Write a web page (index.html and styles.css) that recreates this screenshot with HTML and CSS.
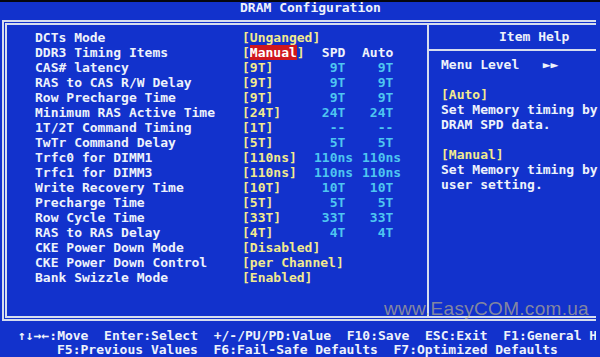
FILE: index.html
```html
<!DOCTYPE html>
<html lang="en">

<head>
    <meta charset="UTF-8">
    <meta name="viewport" content="width=device-width, initial-scale=1.0">
    <title>DRAM Configuration</title>

    <link rel="stylesheet" href="styles.css">
</head>

<body>
    <div class="screen">
        <div class="topstrip"></div>
        <div class="title">DRAM Configuration</div>

        <div class="frame">
            <div class="items">
                <div class="row"><span class="label">DCTs Mode</span><span class="value">[Unganged]</span></div>
                <div class="row"><span class="label">DDR3 Timing Items</span><span class="value">[<span class="sel">Manual</span>]</span><span class="col head"> SPD </span><span class="col head">Auto </span></div>
                <div class="row"><span class="label">CAS# latency</span><span class="value">[9T]</span><span class="col">  9T </span><span class="col">  9T </span></div>
                <div class="row"><span class="label">RAS to CAS R/W Delay</span><span class="value">[9T]</span><span class="col">  9T </span><span class="col">  9T </span></div>
                <div class="row"><span class="label">Row Precharge Time</span><span class="value">[9T]</span><span class="col">  9T </span><span class="col">  9T </span></div>
                <div class="row"><span class="label">Minimum RAS Active Time</span><span class="value">[24T]</span><span class="col"> 24T </span><span class="col"> 24T </span></div>
                <div class="row"><span class="label">1T/2T Command Timing</span><span class="value">[1T]</span><span class="col">  -- </span><span class="col">  -- </span></div>
                <div class="row"><span class="label">TwTr Command Delay</span><span class="value">[5T]</span><span class="col">  5T </span><span class="col">  5T </span></div>
                <div class="row"><span class="label">Trfc0 for DIMM1</span><span class="value">[110ns]</span><span class="col">110ns</span><span class="col">110ns</span></div>
                <div class="row"><span class="label">Trfc1 for DIMM3</span><span class="value">[110ns]</span><span class="col">110ns</span><span class="col">110ns</span></div>
                <div class="row"><span class="label">Write Recovery Time</span><span class="value">[10T]</span><span class="col"> 10T </span><span class="col"> 10T </span></div>
                <div class="row"><span class="label">Precharge Time</span><span class="value">[5T]</span><span class="col">  5T </span><span class="col">  5T </span></div>
                <div class="row"><span class="label">Row Cycle Time</span><span class="value">[33T]</span><span class="col"> 33T </span><span class="col"> 33T </span></div>
                <div class="row"><span class="label">RAS to RAS Delay</span><span class="value">[4T]</span><span class="col">  4T </span><span class="col">  4T </span></div>
                <div class="row"><span class="label">CKE Power Down Mode</span><span class="value">[Disabled]</span></div>
                <div class="row"><span class="label">CKE Power Down Control</span><span class="value">[per Channel]</span></div>
                <div class="row"><span class="label">Bank Swizzle Mode</span><span class="value">[Enabled]</span></div>
            </div>

            <div class="divider"></div>

            <div class="help">
                <div class="help-head">Item Help</div>
                <div class="help-body">
                    <div class="line">Menu Level   &#9658;&#9658;</div>
                    <div class="line"> </div>
                    <div class="line key">[Auto]</div>
                    <div class="line">Set Memory timing by</div>
                    <div class="line">DRAM SPD data.</div>
                    <div class="line"> </div>
                    <div class="line key">[Manual]</div>
                    <div class="line">Set Memory timing by</div>
                    <div class="line">user setting.</div>
                </div>
            </div>
        </div>

        <div class="footer">
            <div class="keys">&#8593;&#8595;&#8594;&#8592;:Move  Enter:Select  +/-/PU/PD:Value  F10:Save  ESC:Exit  F1:General Help</div>
            <div class="keys second">F5:Previous Values  F6:Fail-Safe Defaults  F7:Optimized Defaults</div>
        </div>

        <div class="watermark">www.EasyCOM.com.ua</div>
    </div>
</body>

</html>
```

FILE: styles.css
```css
body {
    margin: 0;
    background: #000;
}

.screen {
    position: relative;
    width: 600px;
    height: 357px;
    overflow: hidden;
    background-color: #1232cc;
    color: #eef2fb;
    font-family: "DejaVu Sans Mono", "Liberation Mono", monospace;
    font-weight: bold;
    font-size: 13px;
}

.topstrip {
    height: 2px;
    background: #05060e;
}

.title {
    height: 18px;
    line-height: 12px;
    padding-left: 240px;
    box-sizing: border-box;
}

.frame {
    display: grid;
    grid-template-columns: 420px 2px 1fr;
    height: 301px;
    margin-left: 2px;
    margin-right: 4px;
    border: 5px double #d6ddee;
    border-right: none;
    box-sizing: border-box;
}

.items {
    padding: 5px 0 0 28px;
}

.row {
    display: grid;
    grid-template-columns: 207px 72px 48px 48px;
    height: 15px;
    line-height: 15px;
    white-space: pre;
}

.value {
    color: #f2ea8e;
}

.sel {
    background: #d0161e;
    color: #fff;
}

.col {
    color: #4ec6f0;
}

.col.head {
    color: #eef2fb;
}

.divider {
    background: #d6ddee;
}

.help {
    min-width: 0;
}

.help-head {
    height: 26px;
    padding: 4px 0 0 70px;
    line-height: 15px;
    box-sizing: border-box;
    border-bottom: 2px solid #d6ddee;
}

.help-body {
    padding: 6px 0 0 12px;
}

.line {
    height: 15px;
    line-height: 15px;
    white-space: pre;
}

.key {
    color: #f2ea8e;
}

.footer {
    padding-top: 8px;
    width: 596px;
    overflow: hidden;
}

.keys {
    height: 14px;
    line-height: 14px;
    padding-left: 18px;
    white-space: pre;
}

.keys.second {
    padding-left: 57px;
}

.watermark {
    position: absolute;
    left: 384px;
    top: 298px;
    font-family: "Liberation Sans", Arial, sans-serif;
    font-weight: normal;
    font-size: 19px;
    line-height: 22px;
    letter-spacing: 0.3px;
    color: rgba(205, 190, 130, 0.62);
}
```
